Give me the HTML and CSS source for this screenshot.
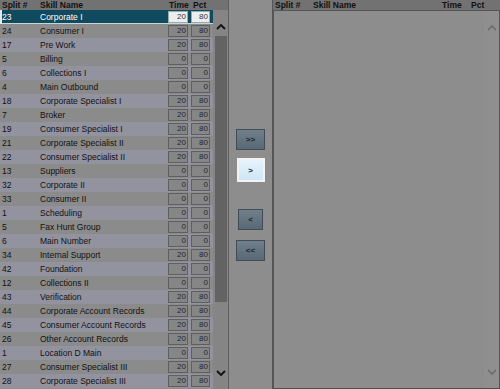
FILE: index.html
```html
<!DOCTYPE html>
<html lang="en">
<head>
    <meta charset="UTF-8">
    <title>Skill Assignment</title>
    <link rel="stylesheet" href="styles.css">
</head>
<body>
    <div class="screen">
        <div class="panel left">
            <div class="head">
                <span class="c-split">Split #</span>
                <span class="c-name">Skill Name</span>
                <span class="c-time">Time</span>
                <span class="c-pct">Pct</span>
            </div>
            <div class="body">
                <div class="rows">
                    <div class="row sel"><span class="c-split">23</span><span class="c-name">Corporate I</span><span class="box">20</span><span class="box">80</span></div>
                    <div class="row"><span class="c-split">24</span><span class="c-name">Consumer I</span><span class="box">20</span><span class="box">80</span></div>
                    <div class="row alt"><span class="c-split">17</span><span class="c-name">Pre Work</span><span class="box">20</span><span class="box">80</span></div>
                    <div class="row"><span class="c-split">5</span><span class="c-name">Billing</span><span class="box">0</span><span class="box">0</span></div>
                    <div class="row alt"><span class="c-split">6</span><span class="c-name">Collections I</span><span class="box">0</span><span class="box">0</span></div>
                    <div class="row"><span class="c-split">4</span><span class="c-name">Main Outbound</span><span class="box">0</span><span class="box">0</span></div>
                    <div class="row alt"><span class="c-split">18</span><span class="c-name">Corporate Specialist I</span><span class="box">20</span><span class="box">80</span></div>
                    <div class="row"><span class="c-split">7</span><span class="c-name">Broker</span><span class="box">20</span><span class="box">80</span></div>
                    <div class="row alt"><span class="c-split">19</span><span class="c-name">Consumer Specialist I</span><span class="box">20</span><span class="box">80</span></div>
                    <div class="row"><span class="c-split">21</span><span class="c-name">Corporate Specialist II</span><span class="box">20</span><span class="box">80</span></div>
                    <div class="row alt"><span class="c-split">22</span><span class="c-name">Consumer Specialist II</span><span class="box">20</span><span class="box">80</span></div>
                    <div class="row"><span class="c-split">13</span><span class="c-name">Suppliers</span><span class="box">0</span><span class="box">0</span></div>
                    <div class="row alt"><span class="c-split">32</span><span class="c-name">Corporate II</span><span class="box">0</span><span class="box">0</span></div>
                    <div class="row"><span class="c-split">33</span><span class="c-name">Consumer II</span><span class="box">0</span><span class="box">0</span></div>
                    <div class="row alt"><span class="c-split">1</span><span class="c-name">Scheduling</span><span class="box">0</span><span class="box">0</span></div>
                    <div class="row"><span class="c-split">5</span><span class="c-name">Fax Hunt Group</span><span class="box">0</span><span class="box">0</span></div>
                    <div class="row alt"><span class="c-split">6</span><span class="c-name">Main Number</span><span class="box">0</span><span class="box">0</span></div>
                    <div class="row"><span class="c-split">34</span><span class="c-name">Internal Support</span><span class="box">20</span><span class="box">80</span></div>
                    <div class="row alt"><span class="c-split">42</span><span class="c-name">Foundation</span><span class="box">0</span><span class="box">0</span></div>
                    <div class="row"><span class="c-split">12</span><span class="c-name">Collections II</span><span class="box">0</span><span class="box">0</span></div>
                    <div class="row alt"><span class="c-split">43</span><span class="c-name">Verification</span><span class="box">20</span><span class="box">80</span></div>
                    <div class="row"><span class="c-split">44</span><span class="c-name">Corporate Account Records</span><span class="box">20</span><span class="box">80</span></div>
                    <div class="row alt"><span class="c-split">45</span><span class="c-name">Consumer Account Records</span><span class="box">20</span><span class="box">80</span></div>
                    <div class="row"><span class="c-split">26</span><span class="c-name">Other Account Records</span><span class="box">20</span><span class="box">80</span></div>
                    <div class="row alt"><span class="c-split">1</span><span class="c-name">Location D Main</span><span class="box">0</span><span class="box">0</span></div>
                    <div class="row"><span class="c-split">27</span><span class="c-name">Consumer Specialist III</span><span class="box">20</span><span class="box">80</span></div>
                    <div class="row alt"><span class="c-split">28</span><span class="c-name">Corporate Specialist III</span><span class="box">20</span><span class="box">80</span></div>
                </div>
                <div class="scroll">
                    <svg class="arrow" width="10" height="6" viewBox="0 0 10 6"><polyline points="1,5 5,1 9,5" fill="none" stroke="#111" stroke-width="1.8"/></svg>
                    <div class="thumb"></div>
                    <div class="track"></div>
                    <svg class="arrow" width="10" height="6" viewBox="0 0 10 6"><polyline points="1,1 5,5 9,1" fill="none" stroke="#111" stroke-width="1.8"/></svg>
                </div>
            </div>
        </div>

        <div class="moves">
            <button class="btn wide">&gt;&gt;</button>
            <button class="btn hot">&gt;</button>
            <button class="btn narrow gap">&lt;</button>
            <button class="btn wide">&lt;&lt;</button>
        </div>

        <div class="panel right">
            <div class="head">
                <span class="c-split">Split #</span>
                <span class="c-name">Skill Name</span>
                <span class="c-time">Time</span>
                <span class="c-pct">Pct</span>
            </div>
            <div class="body framed">
                <div class="rows"></div>
                <div class="scroll faint">
                    <svg class="arrow" width="10" height="6" viewBox="0 0 10 6"><polyline points="1,5 5,1 9,5" fill="none" stroke="#6a6a6a" stroke-width="1.5"/></svg>
                    <div class="track"></div>
                    <svg class="arrow" width="10" height="6" viewBox="0 0 10 6"><polyline points="1,1 5,5 9,1" fill="none" stroke="#6a6a6a" stroke-width="1.5"/></svg>
                </div>
            </div>
        </div>
    </div>
</body>
</html>
```

FILE: styles.css
```css
body {
    margin: 0;
    background-color: #8d8d8d;
    font-family: "Liberation Sans", Arial, sans-serif;
    font-size: 8.5px;
    color: #111;
}
.screen {
    display: flex;
    width: 500px;
    height: 389px;
    overflow: hidden;
}
.panel {
    display: flex;
    flex-direction: column;
}
.panel.left {
    width: 228px;
    border-right: 1px solid #5e5e5e;
}
.panel.right {
    flex: 1;
}
.head {
    display: flex;
    height: 10px;
    line-height: 10px;
    background-color: #727272;
    font-size: 8.5px;
    font-weight: bold;
    color: #111;
}
.c-split {
    width: 38px;
    padding-left: 2px;
}
.c-name {
    flex: 1;
}
.head .c-time {
    width: 24px;
}
.head .c-pct {
    width: 35px;
}
.right .head .c-time {
    width: 29px;
}
.right .head .c-pct {
    width: 29px;
}
.body {
    flex: 1;
    display: flex;
}
.body.framed {
    border: 1px solid #555;
    border-bottom: 1px solid #4e4e4e;
}
.rows {
    flex: 1;
}
.row {
    display: flex;
    align-items: center;
    height: 14px;
    background-color: #8b8b8b;
}
.row.alt {
    background-color: #9393a0;
}
.row.sel {
    background-color: #0f4a5e;
    color: #ffffff;
    box-shadow: inset 2px 0 0 #e8e8e8, inset 0 -1px 0 #c8d4d8;
}
.box {
    width: 17px;
    height: 10px;
    line-height: 10px;
    margin-right: 3px;
    padding-right: 1px;
    text-align: right;
    font-size: 8px;
    color: #1a2636;
    background-color: #868686;
    border: 1px solid #5f5f5f;
}
.box + .box {
    width: 16px;
    margin-right: 3px;
}
.row.sel .box {
    background-color: #ededed;
    border-color: #9aa;
    color: #333;
}
.scroll {
    width: 15px;
    display: flex;
    flex-direction: column;
    align-items: center;
    background-color: #858585;
}
.scroll .arrow {
    margin: 14px 0 6px;
}
.scroll .arrow:last-child {
    margin: 6px 0 13px;
}
.scroll .thumb {
    width: 12px;
    height: 266px;
    background-color: #636363;
}
.scroll .track {
    flex: 1;
}
.scroll.faint {
    background-color: #8f8f8f;
}
.moves {
    width: 43px;
    border-right: 1px solid #555;
    display: flex;
    flex-direction: column;
    align-items: center;
    padding-top: 129px;
}
.btn {
    width: 29px;
    height: 21px;
    padding: 0;
    margin-bottom: 8px;
    font-family: "Liberation Sans", Arial, sans-serif;
    font-size: 8px;
    font-weight: bold;
    color: #1b2530;
    background: linear-gradient(#6f808c, #586874);
    border: 1px solid #444b52;
}
.btn.hot {
    width: 28px;
    height: 24px;
    background: linear-gradient(#e6f3fc, #cfe6f6);
    border: 2px solid #f2f2f2;
    color: #223;
}
.btn.narrow {
    width: 25px;
}
.btn.gap {
    margin-top: 19px;
    margin-bottom: 10px;
}
```
